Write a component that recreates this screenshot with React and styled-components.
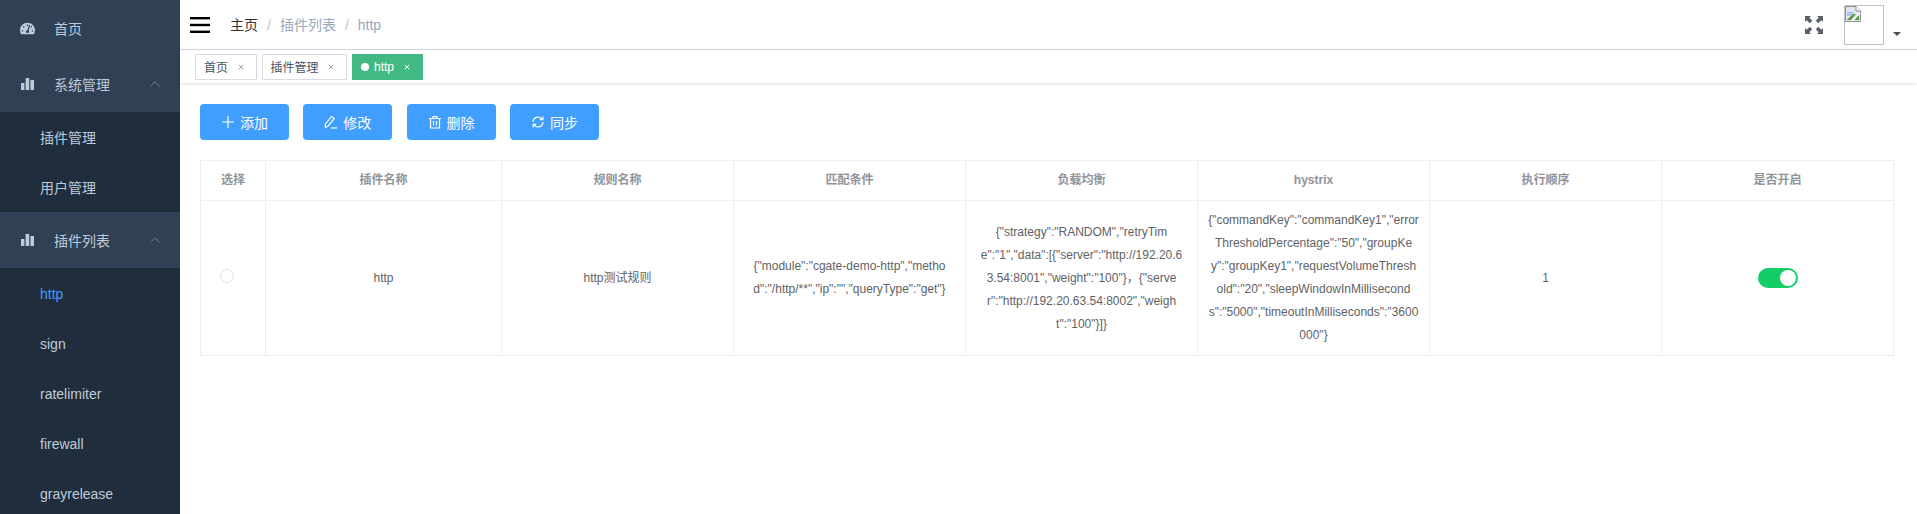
import React from "react";
import styled, { createGlobalStyle } from "styled-components";
import { FaTachometerAlt } from "react-icons/fa";
import { ChevronUp } from "lucide-react";

const GlobalStyle = createGlobalStyle`
  html, body {
    margin: 0;
    padding: 0;
    height: 100%;
    overflow: hidden;
    background: #fff;
    font-family: "Liberation Sans", "Noto Sans CJK SC", sans-serif;
  }
`;

const Layout = styled.div`
  display: flex;
  height: 514px;
  overflow: hidden;
`;

const Sidebar = styled.aside`
  flex: 0 0 180px;
  background: #304156;
  overflow: hidden;
`;

const MenuTitle = styled.div`
  display: flex;
  align-items: center;
  height: 56px;
  padding: 0 16px 0 20px;
  color: #bfcbd9;
  font-size: 14px;
`;

const MenuIcon = styled.span`
  display: flex;
  justify-content: center;
  width: 15px;
  margin-right: 19px;
  color: #bfcbd9;
`;

const MenuLabel = styled.span`
  flex: 1;
`;

const SubMenu = styled.div`
  background: #1f2d3d;
`;

const SubItem = styled.div`
  display: flex;
  align-items: center;
  box-sizing: border-box;
  height: 50px;
  padding: ${(p) => (p.$latin ? "2px" : "0")} 0 0 40px;
  font-size: 14px;
  color: ${(p) => (p.$active ? "#409eff" : "#bfcbd9")};
`;

const Main = styled.div`
  flex: 1;
  min-width: 0;
`;

const Navbar = styled.header`
  display: flex;
  align-items: center;
  height: 49px;
  border-bottom: 1px solid #d8dce5;
  padding-left: 10px;
`;

const Hamburger = styled.svg`
  width: 20px;
  height: 16px;
  margin-right: 20px;
`;

const Crumbs = styled.div`
  display: flex;
  align-items: center;
  flex: 1;
  font-size: 14px;
  line-height: 20px;
  color: #97a8be;
`;

const Crumb = styled.span`
  color: ${(p) => (p.$root ? "#303133" : "#97a8be")};
`;

const CrumbSep = styled.span`
  margin: 0 9px;
  color: #c0c4cc;
`;

const Fullscreen = styled.svg`
  width: 18px;
  height: 18px;
  margin-right: 21px;
`;

const Avatar = styled.div`
  align-self: flex-start;
  width: 38px;
  height: 38px;
  margin-top: 5px;
  border: 1px solid #c0c0c0;
`;

const Caret = styled.span`
  width: 0;
  height: 0;
  margin: 18px 16px 0 9px;
  border-left: 4px solid transparent;
  border-right: 4px solid transparent;
  border-top: 4px solid #4a5058;
`;

const TagsBar = styled.div`
  display: flex;
  align-items: center;
  gap: 5px;
  height: 33px;
  padding-left: 15px;
  box-shadow: 0 1px 3px rgba(0, 0, 0, 0.12), 0 0 3px rgba(0, 0, 0, 0.04);
`;

const Tag = styled.div`
  display: flex;
  align-items: center;
  height: 26px;
  box-sizing: border-box;
  padding: 0 12px 0 8px;
  font-size: 12px;
  border: 1px solid ${(p) => (p.$active ? "#42b983" : "#d8dce5")};
  background: ${(p) => (p.$active ? "#42b983" : "#fff")};
  color: ${(p) => (p.$active ? "#fff" : "#495060")};
`;

const TagDot = styled.span`
  width: 8px;
  height: 8px;
  border-radius: 50%;
  background: #fff;
  margin-right: 5px;
`;

const TagClose = styled.svg`
  width: 6px;
  height: 6px;
  margin-left: 9.5px;
`;

const Content = styled.main`
  padding: 21px 24px 0 20px;
`;

const Toolbar = styled.div`
  display: flex;
  gap: 14.3px;
  margin-bottom: 20px;
`;

const Button = styled.button`
  display: flex;
  align-items: center;
  justify-content: center;
  width: 89px;
  height: 36px;
  padding: 0;
  border: 0;
  border-radius: 4px;
  background: #409eff;
  color: #fff;
  font-family: inherit;
  font-size: 14px;
`;

const ButtonIcon = styled.svg`
  width: 14px;
  height: 14px;
  margin-right: 5px;
  fill: none;
  stroke: #fff;
  stroke-width: 1.2;
`;

const Table = styled.table`
  width: 100%;
  table-layout: fixed;
  border-collapse: separate;
  border-spacing: 0;
  border-top: 1px solid #ebeef5;
  border-left: 1px solid #ebeef5;
  font-size: 12px;
`;

const Th = styled.th`
  padding: 8px 10px;
  line-height: 23px;
  color: #909399;
  font-weight: 700;
  text-align: center;
  border-right: 1px solid #ebeef5;
  border-bottom: 1px solid #ebeef5;
`;

const Td = styled.td`
  padding: 8px 10px;
  line-height: 23px;
  color: #606266;
  text-align: center;
  word-break: break-all;
  border-right: 1px solid #ebeef5;
  border-bottom: 1px solid #ebeef5;
`;

const Radio = styled.span`
  display: inline-block;
  box-sizing: border-box;
  width: 14px;
  height: 14px;
  margin: 0 12px 5px 0;
  vertical-align: middle;
  border: 1px solid #dcdfe6;
  border-radius: 50%;
`;

const Switch = styled.span`
  display: inline-flex;
  justify-content: flex-end;
  align-items: center;
  box-sizing: border-box;
  width: 40px;
  height: 20px;
  padding: 0 2px;
  vertical-align: middle;
  border-radius: 10px;
  background: #13ce66;
`;

const Knob = styled.span`
  width: 16px;
  height: 16px;
  border-radius: 50%;
  background: #fff;
`;

const BarsIcon = () => (
  <svg width="13" height="12" viewBox="0 0 13 12" fill="currentColor">
    <rect x="0" y="5" width="3.4" height="7" />
    <rect x="4.6" y="0" width="3.6" height="12" />
    <rect x="9.4" y="2" width="3.6" height="10" />
  </svg>
);

const PlusIcon = () => (
  <ButtonIcon viewBox="0 0 14 14">
    <path d="M1 7 H13 M7 1 V13" />
  </ButtonIcon>
);

const EditIcon = () => (
  <ButtonIcon viewBox="0 0 14 14">
    <path d="M1.2 12.5 L1.5 9 L7.5 1.5 L10.2 3.6 L4.2 11 Z" />
    <path d="M7 13 H13" />
  </ButtonIcon>
);

const TrashIcon = () => (
  <ButtonIcon viewBox="0 0 14 14">
    <path d="M1 3.5 H13 M5 3.5 V1.5 H9 V3.5 M2.5 3.5 V13 H11.5 V3.5 M5.5 6 V10.5 M8.5 6 V10.5" />
  </ButtonIcon>
);

const SyncIcon = () => (
  <ButtonIcon viewBox="0 0 14 14">
    <path d="M2 7 A5 5 0 0 1 10.8 3.8" />
    <path d="M12 7 A5 5 0 0 1 3.2 10.2" />
    <path d="M11.8 1.6 V4.6 H8.8" />
    <path d="M2.2 12.4 V9.4 H5.2" />
  </ButtonIcon>
);

const CloseX = ({ color }) => (
  <TagClose viewBox="0 0 6 6" stroke={color} strokeWidth="1">
    <path d="M0.8 0.8 L5.2 5.2 M5.2 0.8 L0.8 5.2" />
  </TagClose>
);

const columns = ["选择", "插件名称", "规则名称", "匹配条件", "负载均衡", "hystrix", "执行顺序", "是否开启"];

const matchText = '{"module":"cgate-demo-http","method":"/http/**","ip":"","queryType":"get"}';
const loadText =
  '{"strategy":"RANDOM","retryTime":"1","data":[{"server":"http://192.20.63.54:8001","weight":"100"}，{"server":"http://192.20.63.54:8002","weight":"100"}]}';
const hystrixText =
  '{"commandKey":"commandKey1","errorThresholdPercentage":"50","groupKey":"groupKey1","requestVolumeThreshold":"20","sleepWindowInMilliseconds":"5000","timeoutInMilliseconds":"3600000"}';

const tableCols = [65, 236, 232, 232, 232, 232, 232, 232];

function App() {
  return (
    <>
      <GlobalStyle />
      <Layout>
        <Sidebar>
          <MenuTitle>
            <MenuIcon><FaTachometerAlt size={15} /></MenuIcon>
            <MenuLabel>首页</MenuLabel>
          </MenuTitle>
          <MenuTitle>
            <MenuIcon><BarsIcon /></MenuIcon>
            <MenuLabel>系统管理</MenuLabel>
            <ChevronUp size={18} color="#8594a6" strokeWidth={1} />
          </MenuTitle>
          <SubMenu>
            <SubItem>插件管理</SubItem>
            <SubItem>用户管理</SubItem>
          </SubMenu>
          <MenuTitle>
            <MenuIcon><BarsIcon /></MenuIcon>
            <MenuLabel>插件列表</MenuLabel>
            <ChevronUp size={18} color="#8594a6" strokeWidth={1} />
          </MenuTitle>
          <SubMenu>
            <SubItem $latin $active>http</SubItem>
            <SubItem $latin>sign</SubItem>
            <SubItem $latin>ratelimiter</SubItem>
            <SubItem $latin>firewall</SubItem>
            <SubItem $latin>grayrelease</SubItem>
          </SubMenu>
        </Sidebar>
        <Main>
          <Navbar>
            <Hamburger viewBox="0 0 20 16" fill="#000">
              <rect y="0" width="20" height="2.4" />
              <rect y="6.8" width="20" height="2.4" />
              <rect y="13.6" width="20" height="2.4" />
            </Hamburger>
            <Crumbs>
              <Crumb $root>主页</Crumb>
              <CrumbSep>/</CrumbSep>
              <Crumb>插件列表</Crumb>
              <CrumbSep>/</CrumbSep>
              <Crumb>http</Crumb>
            </Crumbs>
            <Fullscreen viewBox="0 0 18 18" fill="#5a5e66">
              <path d="M0 0 H6 L4.3 1.7 L7.2 4.8 L4.8 7.2 L1.7 4.3 L0 6 Z" />
              <path d="M18 0 H12 L13.7 1.7 L10.8 4.8 L13.2 7.2 L16.3 4.3 L18 6 Z" />
              <path d="M0 18 H6 L4.3 16.3 L7.2 13.2 L4.8 10.8 L1.7 13.7 L0 12 Z" />
              <path d="M18 18 H12 L13.7 16.3 L10.8 13.2 L13.2 10.8 L16.3 13.7 L18 12 Z" />
            </Fullscreen>
            <Avatar>
              <svg width="16" height="16" viewBox="0 0 16 16">
                <path d="M0.5 0.5 H11 L15.5 5 V15.5 H0.5 Z" fill="#dfe6f2" stroke="#8a8f98" />
                <path d="M11 0.5 V5 H15.5" fill="#fff" stroke="#8a8f98" />
                <path d="M2 6 H9 L6 10 H2 Z" fill="#a9c4ec" />
                <path d="M2 14 L8 8 L11 8 L6 14 Z" fill="#4f9a34" />
                <path d="M9 14 L14 9 V14 Z" fill="#4f9a34" />
                <path d="M7 15 L15 7" stroke="#fff" strokeWidth="1.5" />
              </svg>
            </Avatar>
            <Caret />
          </Navbar>
          <TagsBar>
            <Tag>首页<CloseX color="#9aa3b0" /></Tag>
            <Tag>插件管理<CloseX color="#9aa3b0" /></Tag>
            <Tag $active><TagDot />http<CloseX color="#fff" /></Tag>
          </TagsBar>
          <Content>
            <Toolbar>
              <Button><PlusIcon />添加</Button>
              <Button><EditIcon />修改</Button>
              <Button><TrashIcon />删除</Button>
              <Button><SyncIcon />同步</Button>
            </Toolbar>
            <Table>
              <colgroup>
                {tableCols.map((w, i) => (
                  <col key={i} width={w} />
                ))}
              </colgroup>
              <thead>
                <tr>
                  {columns.map((c) => (
                    <Th key={c}>{c}</Th>
                  ))}
                </tr>
              </thead>
              <tbody>
                <tr>
                  <Td><Radio /></Td>
                  <Td>http</Td>
                  <Td>http测试规则</Td>
                  <Td>{matchText}</Td>
                  <Td>{loadText}</Td>
                  <Td>{hystrixText}</Td>
                  <Td>1</Td>
                  <Td><Switch><Knob /></Switch></Td>
                </tr>
              </tbody>
            </Table>
          </Content>
        </Main>
      </Layout>
    </>
  );
}

export default App;
